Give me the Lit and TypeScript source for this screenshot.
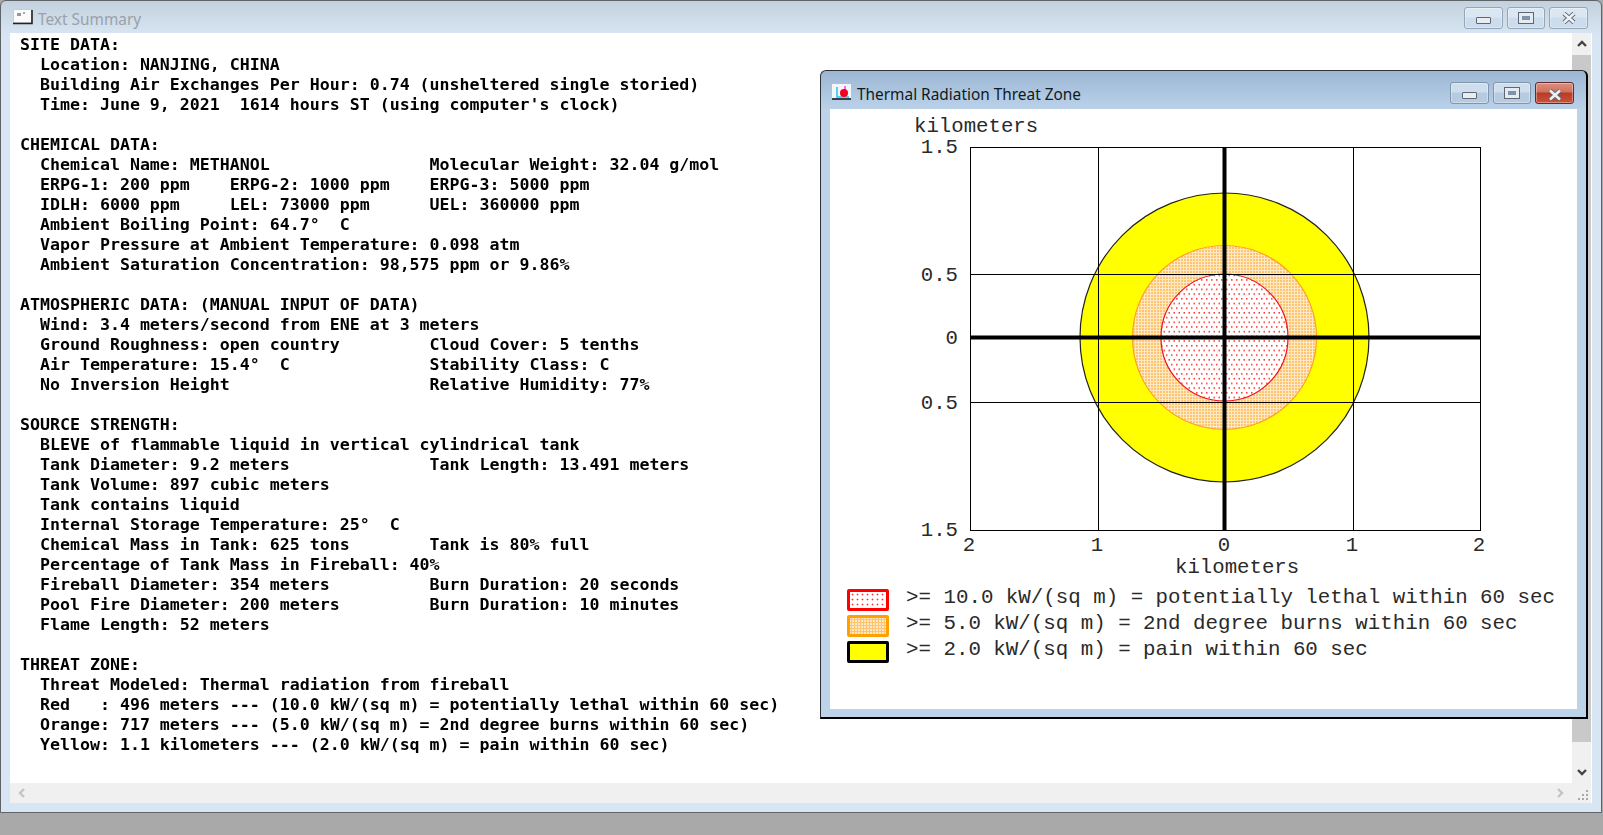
import { LitElement, html, css, svg } from "lit";
import { customElement } from "lit/decorators.js";

const SUMMARY = `SITE DATA:
  Location: NANJING, CHINA
  Building Air Exchanges Per Hour: 0.74 (unsheltered single storied)
  Time: June 9, 2021  1614 hours ST (using computer's clock)

CHEMICAL DATA:
  Chemical Name: METHANOL                Molecular Weight: 32.04 g/mol
  ERPG-1: 200 ppm    ERPG-2: 1000 ppm    ERPG-3: 5000 ppm
  IDLH: 6000 ppm     LEL: 73000 ppm      UEL: 360000 ppm
  Ambient Boiling Point: 64.7°  C
  Vapor Pressure at Ambient Temperature: 0.098 atm
  Ambient Saturation Concentration: 98,575 ppm or 9.86%

ATMOSPHERIC DATA: (MANUAL INPUT OF DATA)
  Wind: 3.4 meters/second from ENE at 3 meters
  Ground Roughness: open country         Cloud Cover: 5 tenths
  Air Temperature: 15.4°  C              Stability Class: C
  No Inversion Height                    Relative Humidity: 77%

SOURCE STRENGTH:
  BLEVE of flammable liquid in vertical cylindrical tank
  Tank Diameter: 9.2 meters              Tank Length: 13.491 meters
  Tank Volume: 897 cubic meters
  Tank contains liquid
  Internal Storage Temperature: 25°  C
  Chemical Mass in Tank: 625 tons        Tank is 80% full
  Percentage of Tank Mass in Fireball: 40%
  Fireball Diameter: 354 meters          Burn Duration: 20 seconds
  Pool Fire Diameter: 200 meters         Burn Duration: 10 minutes
  Flame Length: 52 meters

THREAT ZONE:
  Threat Modeled: Thermal radiation from fireball
  Red   : 496 meters --- (10.0 kW/(sq m) = potentially lethal within 60 sec)
  Orange: 717 meters --- (5.0 kW/(sq m) = 2nd degree burns within 60 sec)
  Yellow: 1.1 kilometers --- (2.0 kW/(sq m) = pain within 60 sec)`;

const LEGEND = [
  { cls: "red", label: ">= 10.0 kW/(sq m) = potentially lethal within 60 sec" },
  { cls: "orange", label: ">= 5.0 kW/(sq m) = 2nd degree burns within 60 sec" },
  { cls: "yellow", label: ">= 2.0 kW/(sq m) = pain within 60 sec" },
];

const Y_LABELS = [
  { y: 44, t: "1.5" },
  { y: 172, t: "0.5" },
  { y: 235, t: "0" },
  { y: 300, t: "0.5" },
  { y: 427, t: "1.5" },
];

const X_LABELS = [
  { x: 139, t: "2" },
  { x: 267, t: "1" },
  { x: 394, t: "0" },
  { x: 522, t: "1" },
  { x: 649, t: "2" },
];

const chart = svg`
  <defs>
    <pattern id="dots-red" width="5" height="9.4" patternUnits="userSpaceOnUse">
      <rect width="5" height="9.4" fill="#fff" />
      <rect x="1" y="1" width="1.5" height="1.5" fill="#ff2a2a" />
      <rect x="3.5" y="5.7" width="1.5" height="1.5" fill="#ff2a2a" />
    </pattern>
    <pattern id="dots-orange" width="3" height="3" patternUnits="userSpaceOnUse">
      <rect width="3" height="3" fill="#ffe8c4" />
      <rect width="2" height="2" fill="#ffc46f" />
    </pattern>
  </defs>
  <rect x="140.5" y="38.5" width="510" height="383" fill="#fff" stroke="#000" />
  <circle cx="394.5" cy="228.5" r="144.5" fill="#ff0" stroke="#222" stroke-width="1.2" />
  <circle cx="394.5" cy="228.5" r="92" fill="url(#dots-orange)" stroke="#ffa020" stroke-width="1.2" />
  <circle cx="394.5" cy="228.5" r="63.5" fill="url(#dots-red)" stroke="#f01020" stroke-width="1.2" />
  <g stroke="#000">
    <path d="M268.5 38v384M523.5 38v384M140 165.5h511M140 293.5h511" fill="none" />
    <path d="M394.5 38v384M140 228.5h511" fill="none" stroke-width="4" />
  </g>
  <text class="lbl" x="84" y="23">kilometers</text>
  ${Y_LABELS.map((l) => svg`<text class="lbl" x="128" y=${l.y} text-anchor="end">${l.t}</text>`)}
  ${X_LABELS.map((l) => svg`<text class="lbl" x=${l.x} y="442" text-anchor="middle">${l.t}</text>`)}
  <text class="lbl" x="345" y="464">kilometers</text>
`;

@customElement("app-root")
export class AppRoot extends LitElement {
  static styles = css`
    :host {
      display: block;
      width: 1603px;
      height: 835px;
      overflow: hidden;
    }

    .desktop {
      position: relative;
      width: 1603px;
      height: 835px;
      background: #a9a9a9;
    }

    .win {
      box-sizing: border-box;
      display: flex;
      flex-direction: column;
      border: 1px solid #5f6468;
      border-radius: 6px 6px 0 0;
    }

    .main {
      width: 1602px;
      height: 813px;
      padding: 0 9px 9px;
      background: linear-gradient(#c3d1df 0, #d8e5f2 34px);
    }

    .titlebar {
      flex: none;
      display: flex;
      align-items: center;
      font-family: "Noto Sans", "Open Sans", sans-serif;
      font-size: 15.4px;
    }

    .main .titlebar {
      height: 32px;
      padding: 0 4px 0 3px;
      gap: 5px;
      color: #9aa1a9;
    }

    .titlebar .name {
      flex: 1;
      white-space: nowrap;
    }

    .main .name {
      margin-top: 4px;
    }

    .main .buttons {
      margin-top: 2px;
    }

    .buttons {
      display: flex;
      gap: 4px;
    }

    .btn {
      box-sizing: border-box;
      width: 39px;
      height: 22px;
      display: flex;
      align-items: center;
      justify-content: center;
      border: 1px solid #8096ad;
      border-radius: 3px;
      background: linear-gradient(#cfdeed 0 45%, #b6cbe0 50% 100%);
      box-shadow: inset 0 0 0 1px rgba(255, 255, 255, 0.35);
    }

    .btn.max {
      width: 38px;
    }

    .main .btn {
      border-color: #93a6ba;
      background: linear-gradient(#dae6f2 0 45%, #cddcec 50% 100%);
    }

    .btn.close {
      border-color: #5f2b30;
      background: linear-gradient(#dc8f7f 0, #d0705d 45%, #b93a25 50%, #c9543a 100%);
    }

    .main .btn.close {
      border-color: #93a6ba;
      background: linear-gradient(#dae6f2 0 45%, #cddcec 50% 100%);
    }

    .glyph-min {
      width: 13px;
      height: 5px;
      margin-top: 4px;
      border: 1px solid #5b6776;
      background: #e8edf2;
      border-radius: 1px;
    }

    .glyph-max {
      width: 8px;
      height: 4px;
      border: 3px solid #e6ebf0;
      outline: 1px solid #5b6776;
      background: #7f93ad;
    }

    .close svg {
      display: block;
    }

    .frame {
      flex: 1;
      min-height: 0;
      display: grid;
      grid-template-columns: 1562px 19px;
      grid-template-rows: 750px 20px;
      background: #fff;
    }

    .summary {
      margin: 0;
      padding: 2px 10px 0;
      overflow: hidden;
      font-family: "DejaVu Sans Mono", "Liberation Mono", monospace;
      font-weight: 700;
      font-size: 16.6px;
      line-height: 20px;
      color: #000;
      filter: blur(0.25px);
    }

    .vscroll {
      display: flex;
      flex-direction: column;
      align-items: center;
      background: #f0f0f0;
    }

    .vscroll .arrow {
      flex: none;
      height: 22px;
      display: flex;
      align-items: center;
    }

    .thumb {
      flex: none;
      align-self: stretch;
      height: 687px;
      background: #c9c9c9;
    }

    .vscroll .spacer {
      flex: 1;
    }

    .hscroll {
      display: flex;
      align-items: center;
      justify-content: space-between;
      padding: 0 6px;
      background: #f0f0f0;
    }

    .corner {
      position: relative;
      background: #f0f0f0;
    }

    .corner svg {
      position: absolute;
      right: 2px;
      bottom: 2px;
    }

    .child {
      position: absolute;
      left: 820px;
      top: 70px;
      width: 768px;
      height: 649px;
      padding: 0 9px 8px;
      background: linear-gradient(#9cb6d3 0, #bcd3ea 40px);
      border: 1px solid #2e3033;
      border-bottom-width: 2px;
      border-right-width: 2px;
      border-bottom-color: #000;
      border-right-color: #000;
    }

    .child .titlebar {
      height: 38px;
      gap: 5px;
      padding: 0 3px 0 2px;
      color: #101820;
    }

    .child .titlebar svg:first-child {
      margin-top: 4px;
    }

    .child .name {
      margin-top: 8px;
    }

    .child .buttons {
      margin-top: 6px;
    }

    .client {
      flex: 1;
      min-height: 0;
      background: #fff;
      display: flex;
      flex-direction: column;
    }

    .plot {
      display: block;
      flex: none;
      width: 747px;
      height: 480px;
    }

    .lbl {
      font-family: "Liberation Mono", "DejaVu Sans Mono", monospace;
      font-size: 20.7px;
      fill: #2a2a2a;
    }

    .legend {
      display: flex;
      flex-direction: column;
      gap: 4px;
      padding-left: 17px;
    }

    .row {
      display: flex;
      gap: 17px;
      height: 22px;
    }

    .swatch {
      box-sizing: border-box;
      flex: none;
      width: 42px;
      height: 22px;
      border: 3px solid;
      border-radius: 2px;
    }

    .swatch.red {
      border-color: #ff0000;
      background: #fff radial-gradient(#ff3030 0.8px, transparent 1.1px) 0 0 / 5px 5px;
    }

    .swatch.orange {
      border-color: #ff9f00;
      background: #ffe8c4 radial-gradient(#ffc46f 1px, transparent 1.2px) 0 0 / 3px 3px;
    }

    .swatch.yellow {
      border-color: #000;
      background: #ff0;
    }

    .row span {
      font-family: "Liberation Mono", "DejaVu Sans Mono", monospace;
      font-size: 20.8px;
      line-height: 18px;
      color: #2a2a2a;
      white-space: pre;
    }
  `;

  private buttons() {
    return html`
      <div class="buttons">
        <div class="btn"><div class="glyph-min"></div></div>
        <div class="btn max"><div class="glyph-max"></div></div>
        <div class="btn close">
          <svg width="16" height="12" viewBox="0 0 16 12">
            <path d="M3 1.5l10 9M13 1.5l-10 9" stroke="#5b6776" stroke-width="4.4" fill="none" />
            <path d="M3 1.5l10 9M13 1.5l-10 9" stroke="#eef1f4" stroke-width="2.6" fill="none" />
          </svg>
        </div>
      </div>
    `;
  }

  private chevron(d: string, color: string) {
    return html`<svg width="12" height="12" viewBox="0 0 12 12">
      <path d=${d} fill="none" stroke=${color} stroke-width="2.4" />
    </svg>`;
  }

  render() {
    return html`
      <div class="desktop">
        <div class="win main">
          <div class="titlebar">
            <svg width="20" height="17" viewBox="0 0 20 17">
              <rect x="0.5" y="0.5" width="18" height="13" fill="#fbfbfb" stroke="#ccc" />
              <path d="M0 14.5h19V1" fill="none" stroke="#222" stroke-width="1.6" />
              <path d="M5 4v3M7 4v3M10 4h2" stroke="#555" stroke-width="1.2" />
            </svg>
            <span class="name">Text Summary</span>
            ${this.buttons()}
          </div>
          <div class="frame">
            <pre class="summary">${SUMMARY}</pre>
            <div class="vscroll">
              <div class="arrow">${this.chevron("M2 8l4-4 4 4", "#444")}</div>
              <div class="thumb"></div>
              <div class="spacer"></div>
              <div class="arrow">${this.chevron("M2 4l4 4 4-4", "#444")}</div>
            </div>
            <div class="hscroll">
              ${this.chevron("M8 2L4 6l4 4", "#c4c4c4")}
              ${this.chevron("M4 2l4 4-4 4", "#c4c4c4")}
            </div>
            <div class="corner">
              <svg width="12" height="12" viewBox="0 0 12 12" fill="#a8a8a8">
                <rect x="9" y="1" width="2" height="2" />
                <rect x="5" y="5" width="2" height="2" />
                <rect x="9" y="5" width="2" height="2" />
                <rect x="1" y="9" width="2" height="2" />
                <rect x="5" y="9" width="2" height="2" />
                <rect x="9" y="9" width="2" height="2" />
              </svg>
            </div>
          </div>
        </div>

        <div class="win child">
          <div class="titlebar">
            <svg width="20" height="16" viewBox="0 0 20 16">
              <rect width="19" height="14" fill="#f4f6fb" />
              <path d="M5 3v10h12" fill="none" stroke="#19c8f0" stroke-width="1.5" />
              <path d="M13 2v10" stroke="#f040e0" stroke-width="1.5" />
              <circle cx="12" cy="9" r="4" fill="#f5001e" />
              <path d="M0 15h19" stroke="#111" stroke-width="1.5" />
            </svg>
            <span class="name">Thermal Radiation Threat Zone</span>
            ${this.buttons()}
          </div>
          <div class="client">
            <svg class="plot" viewBox="0 0 747 480">${chart}</svg>
            <div class="legend">
              ${LEGEND.map(
                (item) => html`
                  <div class="row">
                    <div class="swatch ${item.cls}"></div>
                    <span>${item.label}</span>
                  </div>
                `
              )}
            </div>
          </div>
        </div>
      </div>
    `;
  }
}
